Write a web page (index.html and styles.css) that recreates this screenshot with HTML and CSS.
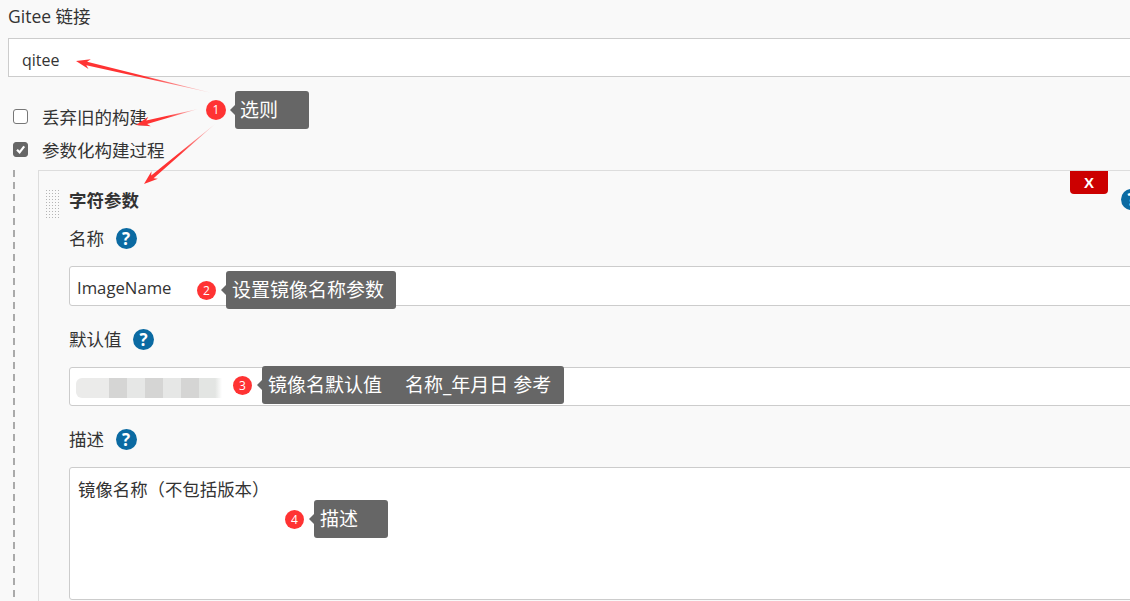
FILE: index.html
```html
<!DOCTYPE html>
<html lang="zh-CN">
<head>
    <meta charset="UTF-8">
    <title>Gitee 链接</title>
    <link rel="stylesheet" href="styles.css">
</head>
<body>
    <main class="page">
        <div class="top-label">Gitee 链接</div>
        <div class="top-input">qitee</div>

        <label class="check-row first">
            <span class="check"></span>
            <span>丢弃旧的构建</span>
        </label>
        <label class="check-row">
            <span class="check checked">
                <svg viewBox="0 0 13 13" width="13" height="13"><path d="M3 6.8 5.6 9.4 10.2 3.4" fill="none" stroke="#fff" stroke-width="2.2"/></svg>
            </span>
            <span>参数化构建过程</span>
        </label>

        <div class="nested">
            <section class="panel">
                <div class="grip"></div>
                <button class="delete" type="button">X</button>
                <span class="help help-corner">?</span>

                <h2 class="panel-title">字符参数</h2>

                <div class="field-label">名称 <span class="help">?</span></div>
                <div class="text-input">ImageName</div>

                <div class="field-label">默认值 <span class="help">?</span></div>
                <div class="text-input short">
                    <div class="blur">
                        <i></i><i class="dark"></i><i></i><i class="dark"></i><i></i><i class="dark"></i><i></i>
                    </div>
                </div>

                <div class="field-label">描述 <span class="help">?</span></div>
                <div class="text-area">镜像名称（不包括版本）</div>
            </section>
        </div>
    </main>

    <!-- annotations pasted on top of the screenshot -->
    <svg class="arrows" width="1130" height="601" viewBox="0 0 1130 601">
        <defs>
            <linearGradient id="fade1" gradientUnits="userSpaceOnUse" x1="212" y1="93" x2="76" y2="61">
                <stop offset="0" stop-color="#f33" stop-opacity="0.15"/><stop offset="0.5" stop-color="#f33"/>
            </linearGradient>
            <linearGradient id="fade2" gradientUnits="userSpaceOnUse" x1="198" y1="109" x2="136" y2="125">
                <stop offset="0" stop-color="#f33" stop-opacity="0.15"/><stop offset="0.5" stop-color="#f33"/>
            </linearGradient>
            <linearGradient id="fade3" gradientUnits="userSpaceOnUse" x1="215" y1="124" x2="144" y2="184">
                <stop offset="0" stop-color="#f33" stop-opacity="0.15"/><stop offset="0.5" stop-color="#f33"/>
            </linearGradient>
        </defs>
        <path d="M212 93 87.1 61.7 90.8 59.3 76 61 88.5 69.1 86.3 65.3Z" fill="url(#fade1)"/>
        <path d="M198 109 147.1 124 150.8 126.3 136 125 148.4 116.7 146.2 120.5Z" fill="url(#fade2)"/>
        <path d="M215 124 153.6 178.3 157.9 178.8 144 184 151.5 171.2 151.2 175.5Z" fill="url(#fade3)"/>
    </svg>

    <div class="note note-1"><span class="dot">1</span><span class="tip tip-1">选则</span></div>
    <div class="note note-2"><span class="dot small">2</span><span class="tip tip-2">设置镜像名称参数</span></div>
    <div class="note note-3"><span class="dot small">3</span><span class="tip tip-3">镜像名默认值&nbsp;&nbsp;&nbsp;&nbsp;&thinsp;名称_年月日 参考</span></div>
    <div class="note note-4"><span class="dot small">4</span><span class="tip tip-4">描述</span></div>
</body>
</html>
```

FILE: styles.css
```css
html, body {
    margin: 0;
    padding: 0;
    height: 601px;
    overflow: hidden;
}

body {
    position: relative;
    background-color: #f9f9f9;
    color: #333;
    font-family: "Open Sans", "Noto Sans CJK SC", sans-serif;
    font-size: 17.5px;
}

.page {
    width: 1200px;
    padding-left: 8px;
    box-sizing: border-box;
}

.top-label {
    height: 38px;
    line-height: 33px;
}

.top-input {
    height: 39px;
    box-sizing: border-box;
    border: 1px solid #ccc;
    background-color: #fff;
    padding-left: 13px;
    font-size: 16px;
    line-height: 43px;
}

.check-row {
    display: flex;
    align-items: center;
    gap: 14px;
    height: 33px;
    padding-left: 5px;
}

.check-row.first {
    margin-top: 23px;
}

.check {
    width: 13px;
    height: 13px;
    border: 1px solid #777;
    border-radius: 3px;
    background-color: #fff;
    display: flex;
}

.check.checked {
    background-color: #666;
    border-color: #666;
}

.nested {
    margin-left: 5px;
    margin-top: 4px;
    padding-left: 25px;
    background-image: repeating-linear-gradient(#aaa 0 7px, transparent 7px 12px);
    background-size: 2px 100%;
    background-repeat: no-repeat;
}

.panel {
    position: relative;
    border-top: 1px solid #ddd;
    border-left: 1px solid #ddd;
    padding: 17px 0 0 30px;
    height: 431px;
    box-sizing: border-box;
}

.grip {
    position: absolute;
    left: 6px;
    top: 18px;
    width: 14px;
    height: 29px;
    background-image: radial-gradient(#b5b5b5 1px, transparent 1px);
    background-size: 3px 3px;
}

.delete {
    position: absolute;
    left: 1031px;
    top: 0;
    width: 38px;
    height: 23px;
    border: none;
    border-radius: 0 0 4px 4px;
    background-color: #c00;
    color: #fff;
    font: bold 15px "Liberation Sans", sans-serif;
    padding: 0;
}

.panel-title {
    margin: 0;
    font-size: 17.5px;
    font-weight: 700;
    line-height: 24px;
    height: 38px;
}

.help {
    display: inline-block;
    width: 21px;
    height: 21px;
    border-radius: 50%;
    background-color: #0b6aa2;
    color: #fff;
    font: bold 17px/21px "Open Sans", sans-serif;
    text-align: center;
    margin-left: 7px;
    vertical-align: 0;
}

.help-corner {
    position: absolute;
    left: 1082px;
    top: 18px;
    margin: 0;
}

.field-label {
    height: 24px;
    line-height: 24px;
    margin-bottom: 16px;
}

.text-input {
    height: 40px;
    box-sizing: border-box;
    border: 1px solid #ccc;
    border-radius: 3px;
    background-color: #fff;
    padding-left: 7px;
    font-size: 16.7px;
    line-height: 42px;
    margin-bottom: 21px;
}

.text-input.short {
    height: 39px;
}

.blur {
    display: flex;
    width: 146px;
    height: 20px;
    margin: 10px 0 0 -1px;
    filter: blur(0.5px);
}

.blur i {
    width: 18px;
    background-color: #e6e7e6;
}

.blur i:first-child {
    width: 33px;
    border-radius: 6px 0 0 6px;
    background-color: #ebebea;
}

.blur i:last-child {
    width: 23px;
    background-image: linear-gradient(90deg, #e3e5e3 70%, #fff);
}

.blur i.dark {
    background-color: #d5d5d4;
}

.text-area {
    height: 133px;
    box-sizing: border-box;
    border: 1px solid #ccc;
    border-radius: 3px;
    background-color: #fff;
    padding: 8px 8px;
    font-size: 17.4px;
    line-height: 26px;
}

.arrows {
    position: absolute;
    left: 0;
    top: 0;
}

.note {
    position: absolute;
    display: flex;
    align-items: center;
}

.note-1 { left: 206px; top: 91px; }
.note-2 { left: 197px; top: 271px; }
.note-3 { left: 233px; top: 366px; }
.note-4 { left: 285px; top: 500px; }

.dot {
    width: 20px;
    height: 20px;
    border-radius: 50%;
    background-color: #f33;
    color: #fff;
    font: 12px/20px "Open Sans", sans-serif;
    text-align: center;
    flex: none;
}

.dot.small {
    width: 19px;
    height: 19px;
    line-height: 19px;
}

.tip {
    position: relative;
    height: 38px;
    line-height: 38px;
    box-sizing: border-box;
    padding-left: 5px;
    border-radius: 3px;
    background-color: #666;
    color: #fff;
    font-size: 19px;
    white-space: nowrap;
    margin-left: 9px;
}

.dot.small + .tip {
    margin-left: 10px;
    padding-left: 6px;
}

.tip::before {
    content: "";
    position: absolute;
    left: -5px;
    top: 14px;
    border-top: 5px solid transparent;
    border-bottom: 5px solid transparent;
    border-right: 5px solid #666;
}

.tip-1 { width: 74px; }
.tip-2 { width: 170px; }
.tip-3 { width: 302px; }
.tip-4 { width: 74px; }
```
